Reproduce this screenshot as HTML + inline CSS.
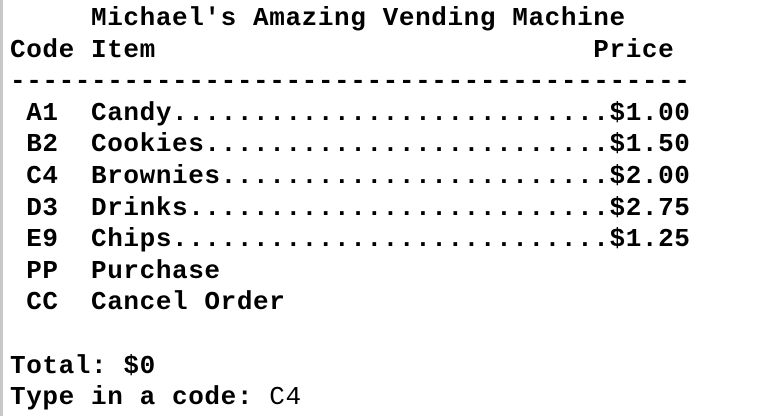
<!DOCTYPE html>
<html><head><meta charset="utf-8"><style>
html,body{margin:0;padding:0;background:#fff;width:768px;height:416px;overflow:hidden}
.b{position:absolute;left:0;top:0;width:3px;height:416px;background:#c8c8c8}
pre{position:absolute;left:10px;top:3px;margin:0;font-family:"Liberation Mono",monospace;font-weight:bold;font-size:26px;letter-spacing:0.6px;line-height:31.6px;color:#000}
.n{font-weight:normal}
</style></head><body><div class="b"></div><pre>     Michael's Amazing Vending Machine
Code Item                           Price
------------------------------------------
 A1  Candy...........................$1.00
 B2  Cookies.........................$1.50
 C4  Brownies........................$2.00
 D3  Drinks..........................$2.75
 E9  Chips...........................$1.25
 PP  Purchase
 CC  Cancel Order

Total: $0
Type in a code: <span class="n">C4</span></pre></body></html>
